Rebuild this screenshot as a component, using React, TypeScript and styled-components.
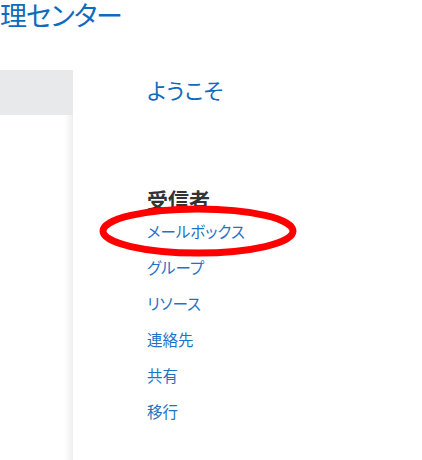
import React from "react";
import styled, { createGlobalStyle } from "styled-components";

const BLUE = "#0f6cbd";
const LINK = "#1f73c7";

const links = ["メールボックス", "グループ", "リソース", "連絡先", "共有", "移行"];

export default function App() {
  return (
    <>
      <GlobalStyle />
      <Page>
        <Header>
          <Title>理センター</Title>
        </Header>
        <Body>
          <Nav>
            <NavTop />
          </Nav>
          <Main>
            <Welcome>ようこそ</Welcome>
            <Section>
              <SectionTitle>受信者</SectionTitle>
              <LinkList>
                {links.map((label, i) => (
                  <LinkItem key={label}>
                    <NavLink href="#">{label}</NavLink>
                    {i === 0 && (
                      <Circle viewBox="0 0 198 52" width="198" height="52">
                        <ellipse cx="99" cy="26" rx="95" ry="22" fill="none" stroke="#ff0000" strokeWidth="7" />
                      </Circle>
                    )}
                  </LinkItem>
                ))}
              </LinkList>
            </Section>
          </Main>
        </Body>
      </Page>
    </>
  );
}

const GlobalStyle = createGlobalStyle`
  html, body {
    margin: 0;
    padding: 0;
    background: #ffffff;
    overflow: hidden;
  }
  body {
    font-family: "Noto Sans CJK JP", "Noto Sans", sans-serif;
    font-feature-settings: "palt";
  }
`;

const Page = styled.div`
  width: 422px;
  height: 460px;
  display: flex;
  flex-direction: column;
`;

const Header = styled.header`
  height: 70px;
`;

const Title = styled.h1`
  margin: 0;
  font-size: 27px;
  font-weight: 400;
  line-height: 30px;
  letter-spacing: -1px;
  color: ${BLUE};
`;

const Body = styled.div`
  flex: 1;
  display: flex;
`;

const Nav = styled.aside`
  width: 73px;
  flex-shrink: 0;
  background: linear-gradient(to right, #ffffff 0, #ffffff 64px, #f1f1f1 72px, #ebebeb 73px);
`;

const NavTop = styled.div`
  height: 45px;
  background: #e8e9eb;
`;

const Main = styled.main`
  flex: 1;
  padding: 3px 0 0 74px;
`;

const Welcome = styled.h2`
  margin: 0;
  font-size: 22px;
  font-weight: 400;
  line-height: 32px;
  color: ${BLUE};
`;

const Section = styled.section`
  margin-top: 80px;
`;

const SectionTitle = styled.h3`
  margin: 0;
  font-size: 21px;
  font-weight: 700;
  line-height: 28px;
  color: #333333;
`;

const LinkList = styled.ul`
  list-style: none;
  margin: 0;
  padding: 0;
  display: flex;
  flex-direction: column;
`;

const LinkItem = styled.li`
  position: relative;
  height: 36px;
  display: flex;
  align-items: center;
`;

const NavLink = styled.a`
  font-size: 15.5px;
  color: ${LINK};
  text-decoration: none;
`;

const Circle = styled.svg`
  position: absolute;
  left: -48px;
  top: -8px;
  pointer-events: none;
`;
